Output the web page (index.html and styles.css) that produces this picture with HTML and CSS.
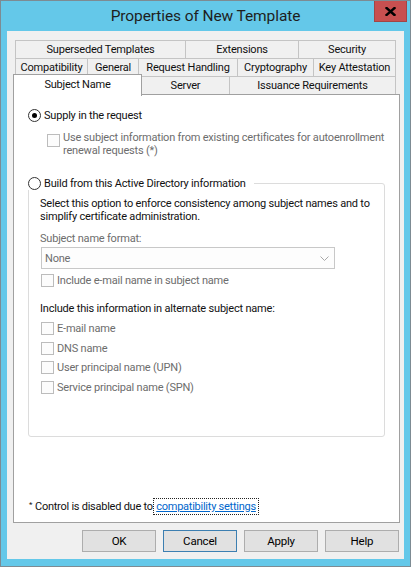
FILE: index.html
```html
<!DOCTYPE html>
<html lang="en">
<head>
<meta charset="utf-8">
<title>Properties of New Template</title>
<link rel="stylesheet" href="styles.css">
</head>
<body>
<div class="window">
  <div class="titlebar">
    <div></div>
    <div class="title">Properties of New Template</div>
    <div class="close-cell">
      <div class="close">
        <svg width="11" height="9" viewBox="0 0 11 9"><path d="M1.5 1 L9.5 8 M9.5 1 L1.5 8" stroke="#000" stroke-width="2.4" stroke-linecap="square" fill="none"/></svg>
      </div>
    </div>
  </div>
  <div class="client">
    <div class="tabs">
      <div class="tabrow back">
        <div class="tab w-superseded">Superseded Templates</div>
        <div class="tab w-extensions">Extensions</div>
        <div class="tab w-security">Security</div>
      </div>
      <div class="tabrow back">
        <div class="tab w-compat">Compatibility</div>
        <div class="tab w-general">General</div>
        <div class="tab w-request">Request Handling</div>
        <div class="tab w-crypto">Cryptography</div>
        <div class="tab w-key">Key Attestation</div>
      </div>
      <div class="tabrow front">
        <div class="tab selected w-subject">Subject Name</div>
        <div class="tab w-server">Server</div>
        <div class="tab w-issuance">Issuance Requirements</div>
      </div>
    </div>
    <div class="panel">
      <div class="opt first">
        <span class="radio checked"></span>
        <span class="label">Supply in the request</span>
      </div>
      <div class="subopt">
        <span class="check disabled"></span>
        <span class="label dim">Use subject information from existing certificates for autoenrollment<br>renewal requests (*)</span>
      </div>
      <fieldset class="group">
        <legend class="legend">
          <span class="radio"></span>
          <span class="label">Build from this Active Directory information</span>
        </legend>
        <div class="group-body">
          <p class="desc">Select this option to enforce consistency among subject names and to<br>simplify certificate administration.</p>
          <div class="fieldlabel dim">Subject name format:</div>
          <div class="select">
            <span class="dim">None</span>
            <svg class="chev" width="9" height="5" viewBox="0 0 9 5"><path d="M0.5 0.5 L4.5 4.5 L8.5 0.5" stroke="#a8a8a8" stroke-width="1" fill="none"/></svg>
          </div>
          <div class="crow email">
            <span class="check disabled"></span>
            <span class="label dim">Include e-mail name in subject name</span>
          </div>
          <div class="alt-title">Include this information in alternate subject name:</div>
          <div class="crow alt first-alt">
            <span class="check disabled"></span>
            <span class="label dim">E-mail name</span>
          </div>
          <div class="crow alt">
            <span class="check disabled"></span>
            <span class="label dim">DNS name</span>
          </div>
          <div class="crow alt tight">
            <span class="check disabled"></span>
            <span class="label dim">User principal name (UPN)</span>
          </div>
          <div class="crow alt">
            <span class="check disabled"></span>
            <span class="label dim">Service principal name (SPN)</span>
          </div>
        </div>
      </fieldset>
      <div class="footnote">
        <span class="star">*</span><span class="foot-text">Control is disabled due to <a class="link" href="#">compatibility settings</a></span>
      </div>
    </div>
    <div class="buttons">
      <button class="btn">OK</button>
      <button class="btn default">Cancel</button>
      <button class="btn">Apply</button>
      <button class="btn">Help</button>
    </div>
  </div>
</div>
</body>
</html>
```
FILE: styles.css
```css
* { box-sizing: border-box; }
html, body { margin: 0; padding: 0; }
body {
  width: 411px;
  height: 567px;
  overflow: hidden;
  font-family: Roboto, "Liberation Sans", sans-serif;
  font-size: 11px;
  letter-spacing: -0.2px;
  color: #111;
}
.window {
  width: 411px;
  height: 567px;
  border: 1px solid #7d8b93;
  background: #64c8e9;
  display: flex;
  flex-direction: column;
}
.titlebar {
  height: 30px;
  flex: none;
  display: grid;
  grid-template-columns: 1fr auto 1fr;
  align-items: center;
}
.title {
  font-size: 15.5px;
  letter-spacing: -0.1px;
  color: #1e1e1e;
  white-space: nowrap;
}
.close-cell {
  justify-self: end;
  align-self: start;
  padding-right: 3px;
}
.close {
  width: 33px;
  height: 21px;
  background: #c75050;
  border: 1px solid #a34545;
  border-top: none;
  display: flex;
  align-items: center;
  justify-content: center;
}
.client {
  flex: 1;
  margin: 0 6px 7px 6px;
  background: #f0f0f0;
  padding: 9px 4px 7px 6px;
  display: flex;
  flex-direction: column;
}
.tabs {
  display: flex;
  flex-direction: column;
}
.tabrow {
  display: flex;
  height: 19px;
}
.tabrow + .tabrow { margin-top: -1px; }
.tabrow.back { margin-left: 2px; }
.tab {
  height: 19px;
  border: 1px solid #c4c4c4;
  background: #f0f0f0;
  display: flex;
  align-items: center;
  justify-content: center;
  white-space: nowrap;
  line-height: 13px;
}
.tab + .tab { margin-left: -1px; }
.tab.selected {
  position: relative;
  z-index: 2;
  margin-top: -2px;
  height: 22px;
  background: #fff;
  border-color: #a0a0a0;
  border-bottom: none;
  padding-bottom: 2px;
}
.w-superseded { width: 171px; }
.w-extensions { width: 114px; }
.w-security { width: 98px; }
.w-compat { width: 73px; }
.w-general { width: 52px; }
.w-request { width: 100px; }
.w-crypto { width: 77px; }
.w-key { width: 83px; }
.w-subject { width: 129px; }
.w-server { width: 89px; }
.w-issuance { width: 167px; }

.panel {
  position: relative;
  z-index: 1;
  margin-top: -1px;
  height: 429px;
  background: #fff;
  border: 1px solid #a0a0a0;
  display: flex;
  flex-direction: column;
  padding: 0 0 9px 14px;
}
.label { line-height: 13px; white-space: nowrap; }
.dim { color: #6d6d6d; }
.opt {
  display: flex;
  align-items: center;
  height: 13px;
}
.opt.first { margin-top: 14px; }
.radio {
  width: 13px;
  height: 13px;
  flex: none;
  border: 1px solid #333;
  border-radius: 50%;
  background: #fff;
  display: inline-flex;
  align-items: center;
  justify-content: center;
  margin-right: 3px;
}
.radio.checked::after {
  content: "";
  width: 5px;
  height: 5px;
  border-radius: 50%;
  background: #000;
}
.check {
  width: 13px;
  height: 13px;
  flex: none;
  border: 1px solid #333;
  background: #fff;
  margin-right: 3px;
}
.check.disabled { border-color: #bcbcbc; background: #fcfcfc; }
.subopt {
  display: flex;
  align-items: flex-start;
  margin-top: 9px;
  padding-left: 19px;
}
.subopt .check { margin-top: 3px; }
.group {
  margin: 20px 14px 0 0;
  padding: 0;
  border: 1px solid #dcdcdc;
  border-radius: 3px;
  min-width: 0;
}
.legend {
  display: flex;
  align-items: center;
  height: 13px;
  padding: 0 8px 0 0;
  margin-left: -1px;
}
.group-body {
  padding: 7px 0 42px 11px;
}
.desc {
  margin: 0;
  line-height: 13px;
  white-space: nowrap;
}
.fieldlabel { margin-top: 9px; line-height: 13px; }
.select {
  margin: 2px 0 0 1px;
  width: 294px;
  height: 22px;
  border: 1px solid #c8c8c8;
  background: #fdfdfd;
  display: flex;
  align-items: center;
  justify-content: space-between;
  padding: 0 4px 0 3px;
}
.chev { margin-right: 1px; }
.crow {
  display: flex;
  align-items: center;
  height: 13px;
  margin-left: 1px;
}
.crow.email { margin-top: 5px; }
.alt-title { margin-top: 15px; line-height: 13px; white-space: nowrap; }
.crow.alt { margin-top: 7px; }
.crow.alt.tight { margin-top: 6px; }
.footnote {
  margin-top: auto;
  padding-left: 1px;
  line-height: 13px;
  white-space: nowrap;
  display: flex;
  align-items: flex-start;
}
.star {
  font-size: 8px;
  line-height: 8px;
  margin-top: 1px;
  width: 6px;
}
.foot-text { letter-spacing: -0.25px; }
.link {
  color: #0066cc;
  text-decoration: underline;
  outline: 1px dotted #222;
  outline-offset: 1px;
  padding: 0 1px 0 1px;
}
.buttons {
  margin-top: 7px;
  display: flex;
  justify-content: flex-end;
  gap: 7px;
  padding-right: 1px;
}
.btn {
  width: 74px;
  height: 22px;
  border: 1px solid #adadad;
  background: #e1e1e1;
  font-family: inherit;
  font-size: 11.5px;
  letter-spacing: -0.2px;
  color: #000;
  padding: 0;
  margin: 0;
}
.btn.default { border-color: #3c7fb1; }
```
